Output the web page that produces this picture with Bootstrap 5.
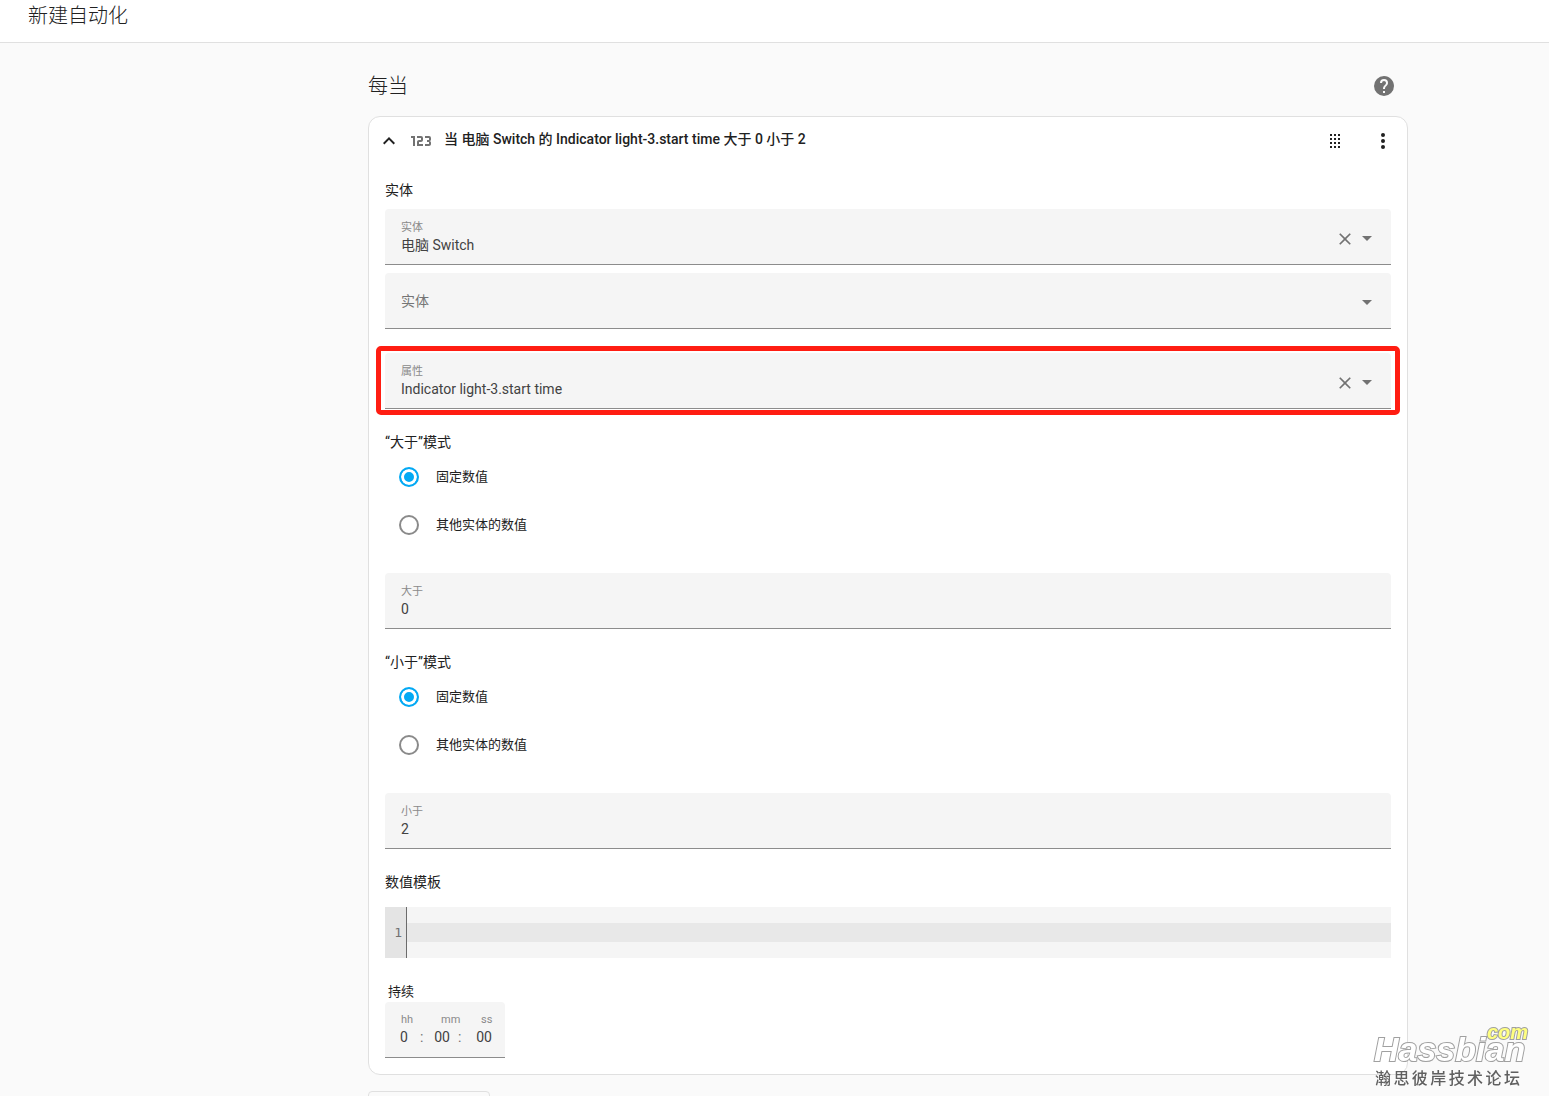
<!DOCTYPE html>
<html lang="zh-CN">
<head>
<meta charset="utf-8">
<meta name="viewport" content="width=device-width, initial-scale=1">
<title>新建自动化</title>
<link href="https://cdn.jsdelivr.net/npm/bootstrap@5.3.0/dist/css/bootstrap.min.css" rel="stylesheet">
<style>
  body {
    font-family: Roboto, "Noto Sans CJK SC", sans-serif;
    font-size: 14px;
    line-height: 20px;
    color: #212121;
    background: #fafafa;
  }
  .app-header { height: 43px; padding: 0 28px 10px; border-bottom: 1px solid #e0e0e0; }
  .page-title, .section-title { font-size: 20px; line-height: 30px; font-weight: 300; }
  .app-main { padding-left: 227px; }
  .editor-column { max-width: 1040px; }
  .section-head { height: 73px; padding: 12px 12px 0 0; }
  .trigger-card { border: 1px solid #e0e0e0; border-radius: 12px; background: #fff; padding: 0 16px 16px; }
  .trigger-head { height: 48px; margin: 0 -4px 0 -8px; }
  .trigger-name { font-size: 14px; line-height: 20px; font-weight: 500; padding: 0 0 4px 11px; }
  .icon-btn { border: 0; padding: 0; background: none; color: inherit; display: flex; }
  .icon-btn svg, .type-icon { width: 24px; height: 24px; fill: currentColor; }
  .icon-btn.size-sm svg { width: 20px; height: 20px; }
  .muted { color: #727272; }
  .group-label { font-size: 14px; line-height: 18px; font-weight: 400; margin: 0 0 2px; float: none; }

  .field-box {
    height: 56px;
    padding: 0 12px 0 16px;
    background: #f5f5f5;
    border-bottom: 1px solid #8c8c8c;
    border-radius: 4px 4px 0 0;
  }
  .field-caption { font-size: 11px; line-height: 16px; color: #8a8a8a; }
  .plain-input {
    border: 0; padding: 0; background: none; outline: 0; width: 100%;
    height: 18px; line-height: 18px; font-size: 14px; color: #424242;
  }
  .plain-input::placeholder { color: #757575; opacity: 1; }
  .highlighted { position: relative; }
  .highlight-frame {
    position: absolute; inset: -7px -9px;
    border: 5px solid #ff1d12; border-radius: 5px; pointer-events: none;
  }

  .radio-row { height: 48px; padding-left: 14px; gap: 17px; font-size: 13px; }
  .radio-row .form-check-input {
    width: 20px; height: 20px; margin: 0; border: 2px solid #8a8a8a; background: #fff;
  }
  .radio-row .form-check-input:checked {
    border-color: #03a9f4; background: #03a9f4; box-shadow: inset 0 0 0 3px #fff;
  }

  .code-editor { background: #f5f5f5; font-family: "DejaVu Sans Mono", monospace; font-size: 13px; line-height: 19px; }
  .code-gutter { width: 22px; padding: 16px 4px 16px 0; background: #e4e4e4; border-right: 1px solid #6b6b6b; color: #727272; text-align: right; }
  .code-line { height: 19px; padding: 0 6px; border: 0; outline: 0; resize: none; background: #e8e8e8; line-height: 19px; overflow: hidden; }

  .duration-label { font-size: 13px; line-height: 20px; padding-left: 3px; }
  .duration-box { height: 56px; background: #f5f5f5; border-bottom: 1px solid #8c8c8c; border-radius: 4px 4px 0 0; }
  .time-cell { width: 40px; padding-top: 10px; }
  .time-cell .field-caption { padding-left: 16px; }
  .time-value { padding-left: 8px; gap: 5px; line-height: 18px; color: #727272; }
  .time-value .plain-input { width: 22px; text-align: center; }
  .time-value.middle { padding-left: 6px; }
  .add-btn { width: 122px; height: 36px; border: 1px solid #e0e0e0; border-radius: 4px; background: none; }

  .watermark { position: fixed; right: 21px; bottom: 7px; width: 154px; pointer-events: none; }
  .brand-name, .brand-tld {
    font-family: "Liberation Sans", Arial, sans-serif; font-style: italic; font-weight: 700;
    paint-order: stroke fill; -webkit-text-stroke: 2px #a0a0a0;
  }
  .brand-name { font-size: 34px; line-height: 32px; color: #fff; margin-bottom: 4px; }
  .brand-tld { position: absolute; right: 0; top: -11px; font-size: 20px; line-height: 20px; color: #ffff80; }
  .brand-sub { font-size: 16px; line-height: 20px; font-weight: 500; color: #606060; width: 146px; padding-left: 1px; }
</style>
<script src="https://cdn.jsdelivr.net/npm/bootstrap@5.3.0/dist/js/bootstrap.bundle.min.js"></script>
</head>
<body>
<div class="vh-100 overflow-hidden d-flex flex-column">
  <header class="app-header bg-white d-flex align-items-center flex-shrink-0">
    <h1 class="page-title m-0">新建自动化</h1>
  </header>

  <main class="app-main">
    <div class="editor-column mx-auto">
      <div class="section-head d-flex justify-content-between align-items-center">
        <h2 class="section-title m-0">每当</h2>
        <button type="button" class="icon-btn muted" aria-label="帮助">
          <svg viewBox="0 0 24 24"><path d="M15.07,11.25L14.17,12.17C13.45,12.89 13,13.5 13,15H11V14.5C11,13.39 11.45,12.39 12.17,11.67L13.41,10.41C13.78,10.05 14,9.55 14,9C14,7.89 13.1,7 12,7A2,2 0 0,0 10,9H8A4,4 0 0,1 12,5A4,4 0 0,1 16,9C16,9.88 15.64,10.67 15.07,11.25M13,19H11V17H13M12,2A10,10 0 0,0 2,12A10,10 0 0,0 12,22A10,10 0 0,0 22,12C22,6.47 17.5,2 12,2Z"/></svg>
        </button>
      </div>

      <section class="trigger-card">
        <div class="trigger-head d-flex align-items-center">
          <button type="button" class="icon-btn" aria-label="收起">
            <svg viewBox="0 0 24 24"><path d="M7.41,15.41L12,10.83L16.59,15.41L18,14L12,8L6,14L7.41,15.41Z"/></svg>
          </button>
          <svg class="type-icon muted ms-2" viewBox="0 0 24 24" aria-hidden="true"><path d="M4,17V9H2V7H6V17H4M22,15C22,16.11 21.1,17 20,17H16V15H20V13H18V11H20V9H16V7H20A2,2 0 0,1 22,9V10.5A1.5,1.5 0 0,1 20.5,12A1.5,1.5 0 0,1 22,13.5V15M14,15V17H8V13C8,11.89 8.9,11 10,11H12V9H8V7H12A2,2 0 0,1 14,9V11C14,12.11 13.1,13 12,13H10V15H14Z"/></svg>
          <h3 class="trigger-name m-0 flex-grow-1">当 电脑 Switch 的 Indicator light-3.start time 大于 0 小于 2</h3>
          <button type="button" class="icon-btn me-4" aria-label="拖动">
            <svg viewBox="0 0 24 24"><path d="M7,5h2v2H7zM11,5h2v2h-2zM15,5h2v2h-2zM7,9h2v2H7zM11,9h2v2h-2zM15,9h2v2h-2zM7,13h2v2H7zM11,13h2v2h-2zM15,13h2v2h-2zM7,17h2v2H7zM11,17h2v2h-2zM15,17h2v2h-2z"/></svg>
          </button>
          <button type="button" class="icon-btn" aria-label="更多">
            <svg viewBox="0 0 24 24"><circle cx="12" cy="6" r="2"/><circle cx="12" cy="12" r="2"/><circle cx="12" cy="18" r="2"/></svg>
          </button>
        </div>

        <div class="group-label mt-3 pb-2">实体</div>
        <div class="field-box d-flex align-items-center mb-2">
          <div class="flex-grow-1 d-flex flex-column">
            <label class="field-caption" for="entity">实体</label>
            <input class="plain-input" id="entity" type="text" value="电脑 Switch">
          </div>
          <button type="button" class="icon-btn size-sm muted mt-1" aria-label="清除实体"><svg viewBox="0 0 24 24"><path d="M19,6.41L17.59,5L12,10.59L6.41,5L5,6.41L10.59,12L5,17.59L6.41,19L12,13.41L17.59,19L19,17.59L13.41,12L19,6.41Z"/></svg></button>
          <button type="button" class="icon-btn muted mt-1" aria-label="展开实体"><svg viewBox="0 0 24 24"><path d="M7,9L12,14L17,9H7Z"/></svg></button>
        </div>
        <div class="field-box d-flex align-items-center mb-4">
          <input class="plain-input" type="text" placeholder="实体" aria-label="实体">
          <button type="button" class="icon-btn muted mt-1" aria-label="展开"><svg viewBox="0 0 24 24"><path d="M7,9L12,14L17,9H7Z"/></svg></button>
        </div>
        <div class="field-box highlighted d-flex align-items-center">
          <div class="flex-grow-1 d-flex flex-column">
            <label class="field-caption" for="attribute">属性</label>
            <input class="plain-input" id="attribute" type="text" value="Indicator light-3.start time">
          </div>
          <button type="button" class="icon-btn size-sm muted mt-1" aria-label="清除属性"><svg viewBox="0 0 24 24"><path d="M19,6.41L17.59,5L12,10.59L6.41,5L5,6.41L10.59,12L5,17.59L6.41,19L12,13.41L17.59,19L19,17.59L13.41,12L19,6.41Z"/></svg></button>
          <button type="button" class="icon-btn muted mt-1" aria-label="展开属性"><svg viewBox="0 0 24 24"><path d="M7,9L12,14L17,9H7Z"/></svg></button>
          <div class="highlight-frame"></div>
        </div>

        <fieldset class="mt-4">
          <legend class="group-label">“大于”模式</legend>
          <div class="radio-row d-flex align-items-center">
            <input class="form-check-input" type="radio" name="above" id="above-fixed" checked>
            <label for="above-fixed">固定数值</label>
          </div>
          <div class="radio-row d-flex align-items-center">
            <input class="form-check-input" type="radio" name="above" id="above-entity">
            <label for="above-entity">其他实体的数值</label>
          </div>
        </fieldset>
        <div class="field-box d-flex align-items-center mt-4">
          <div class="flex-grow-1 d-flex flex-column">
            <label class="field-caption" for="above-value">大于</label>
            <input class="plain-input" id="above-value" type="text" value="0">
          </div>
        </div>

        <fieldset class="mt-4">
          <legend class="group-label">“小于”模式</legend>
          <div class="radio-row d-flex align-items-center">
            <input class="form-check-input" type="radio" name="below" id="below-fixed" checked>
            <label for="below-fixed">固定数值</label>
          </div>
          <div class="radio-row d-flex align-items-center">
            <input class="form-check-input" type="radio" name="below" id="below-entity">
            <label for="below-entity">其他实体的数值</label>
          </div>
        </fieldset>
        <div class="field-box d-flex align-items-center mt-4">
          <div class="flex-grow-1 d-flex flex-column">
            <label class="field-caption" for="below-value">小于</label>
            <input class="plain-input" id="below-value" type="text" value="2">
          </div>
        </div>

        <label class="group-label d-block pt-4 mb-3" for="template">数值模板</label>
        <div class="code-editor d-flex align-items-center">
          <div class="code-gutter">1</div>
          <textarea class="code-line flex-grow-1" id="template" rows="1"></textarea>
        </div>

        <div class="duration-label pt-4" id="duration">持续</div>
        <div class="duration-box d-inline-flex align-top" role="group" aria-labelledby="duration">
          <div class="time-cell">
            <label class="field-caption d-block" for="hh">hh</label>
            <div class="time-value d-flex"><input class="plain-input" id="hh" type="text" value="0"><span>:</span></div>
          </div>
          <div class="time-cell">
            <label class="field-caption d-block" for="mm">mm</label>
            <div class="time-value middle d-flex"><input class="plain-input" id="mm" type="text" value="00"><span>:</span></div>
          </div>
          <div class="time-cell">
            <label class="field-caption d-block" for="ss">ss</label>
            <div class="time-value d-flex"><input class="plain-input" id="ss" type="text" value="00"></div>
          </div>
        </div>
      </section>
      <button type="button" class="add-btn d-block mt-3" aria-label="添加触发条件"></button>
    </div>
  </main>
</div>

<div class="watermark">
  <div class="brand-name">Hassbian</div>
  <div class="brand-tld">com</div>
  <div class="brand-sub d-flex justify-content-between"><span>瀚</span><span>思</span><span>彼</span><span>岸</span><span>技</span><span>术</span><span>论</span><span>坛</span></div>
</div>
</body>
</html>
